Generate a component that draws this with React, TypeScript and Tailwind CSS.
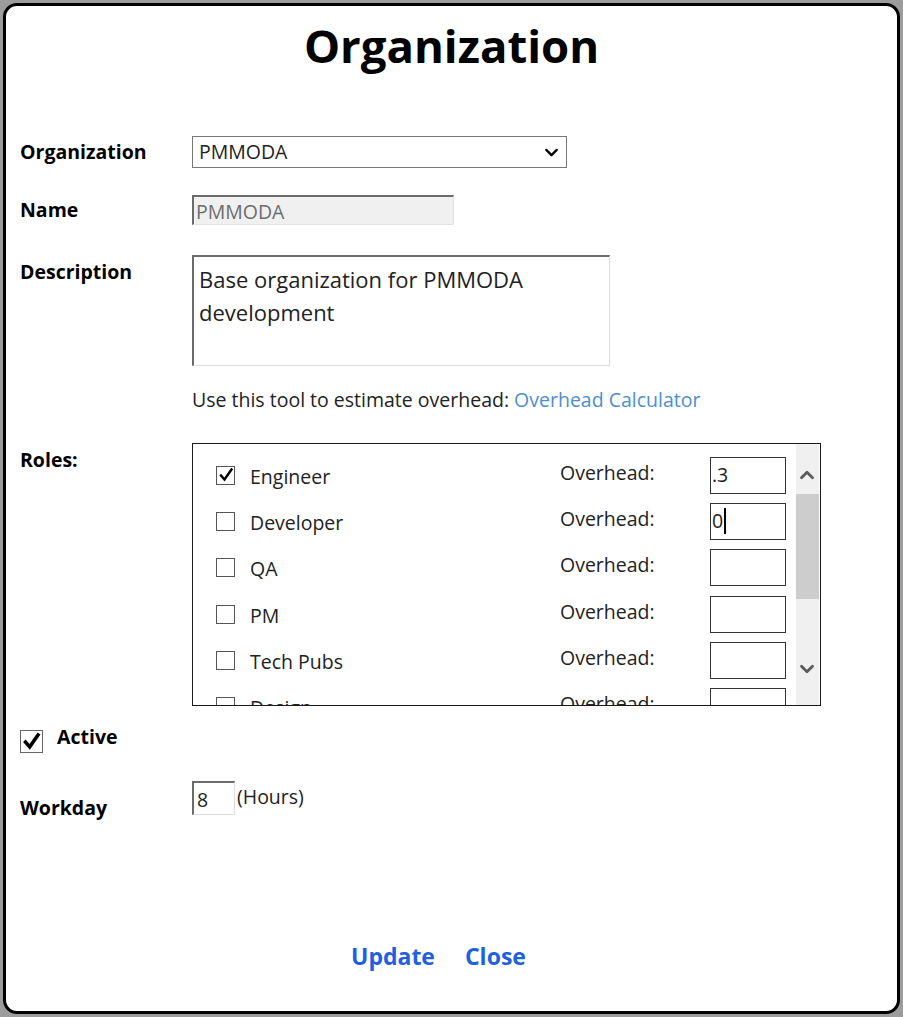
import React from 'react';
import { ChevronDown, ChevronUp } from 'lucide-react';

const roles = [
  { name: 'Engineer', checked: true, value: '.3' },
  { name: 'Developer', checked: false, value: '0', caret: true },
  { name: 'QA', checked: false, value: '' },
  { name: 'PM', checked: false, value: '' },
  { name: 'Tech Pubs', checked: false, value: '' },
  { name: 'Design', checked: false, value: '' },
];

const Check: React.FC<{ size: number; stroke: number }> = ({ size, stroke }) => (
  <svg width={size} height={size} viewBox="0 0 16 16" fill="none">
    <path d="M3 8.5 L6.5 12.5 L13.5 2.5" stroke="#000" strokeWidth={stroke} strokeLinecap="square" />
  </svg>
);

const RoleRow: React.FC<{ role: (typeof roles)[number] }> = ({ role }) => (
  <div className="flex h-[46.4px] shrink-0 items-start leading-[26px]">
    <div className="mt-[9px] flex h-[19px] w-[19px] items-center justify-center border border-[#555] bg-white">
      {role.checked && <Check size={16} stroke={2.4} />}
    </div>
    <span className="ml-[15px] mt-[7px] w-[310px] text-[19.5px] text-[#222]">{role.name}</span>
    <span className="mt-[3px] w-[150px] text-[19.5px] text-[#222]">Overhead:</span>
    <div className="flex h-[37px] w-[76px] items-center border-[1.5px] border-[#333] bg-white pl-[1px] text-[19.5px] text-[#222]">
      {role.value}
      {role.caret && <span className="ml-[1px] h-[26px] w-[1.5px] bg-black" />}
    </div>
  </div>
);

export default function App() {
  return (
    <div className="h-[1017px] w-[903px] bg-[#9c9c9c] p-[3px] font-['Open_Sans',sans-serif]">
      <div className="flex h-full flex-col rounded-[14px] border-[3px] border-black bg-white pl-[14px] pr-[14px]">
        <h1 className="mt-[9px] text-center text-[45.5px] font-bold leading-[60px] text-black">Organization</h1>

        <div className="mt-[61px] flex items-center leading-[26px]">
          <span className="w-[172px] text-[19.5px] font-bold text-black">Organization</span>
          <div className="flex h-[32px] w-[375px] items-center justify-between border border-[#777] bg-white pl-[6px] pr-[4px] text-[19.5px] text-[#222]">
            PMMODA
            <ChevronDown size={21} strokeWidth={2.6} className="text-black" />
          </div>
        </div>

        <div className="mt-[27px] flex items-center leading-[26px]">
          <span className="w-[172px] text-[19.5px] font-bold text-black">Name</span>
          <div className="flex h-[30px] w-[262px] items-end overflow-hidden border-l-2 border-t-2 border-[#6b6b6b] border-b border-r border-b-[#e2e2e2] border-r-[#e2e2e2] bg-[#f0f0f0] pl-[2px] text-[19.5px] leading-[24px] text-[#6d6d6d]">
            PMMODA
          </div>
        </div>

        <div className="mt-[30px] flex items-start leading-[26px]">
          <span className="mt-[4px] w-[172px] text-[19.5px] font-bold text-black">Description</span>
          <div className="h-[111px] w-[418px] border-l-2 border-t-2 border-[#6b6b6b] border-b border-r border-b-[#dcdcdc] border-r-[#dcdcdc] bg-white pl-[5px] pt-[6px] text-[22px] leading-[33px] text-[#222]">
            Base organization for PMMODA
            <br />
            development
          </div>
        </div>

        <p className="ml-[172px] mt-[21px] text-[19.5px] leading-[26px] text-[#222]">
          Use this tool to estimate overhead: <span className="text-[#4d8fcc]">Overhead Calculator</span>
        </p>

        <div className="mt-[30px] flex items-start leading-[26px]">
          <span className="mt-[4px] w-[172px] text-[19.5px] font-bold text-black">Roles:</span>
          <div className="flex h-[263px] w-[629px] border-[1.5px] border-[#1a1a1a] bg-white">
            <div className="flex flex-1 flex-col overflow-hidden pl-[23px] pt-[12.5px]">
              {roles.map((r) => (
                <RoleRow key={r.name} role={r} />
              ))}
            </div>
            <div className="mr-[1.5px] flex w-[23px] flex-col items-center bg-[#f0f0f0]">
              <ChevronUp size={22} strokeWidth={3} className="mt-[20px] text-[#5a5a5a]" />
              <div className="mt-[8px] h-[105px] w-full bg-[#cdcdcd]" />
              <ChevronDown size={22} strokeWidth={3} className="mt-[59px] text-[#5a5a5a]" />
            </div>
          </div>
        </div>

        <div className="mt-[18px] flex items-start leading-[26px]">
          <div className="mt-[6px] flex h-[23px] w-[23px] items-center justify-center border-[1.5px] border-[#666] bg-white">
            <Check size={19} stroke={3} />
          </div>
          <span className="ml-[14px] text-[19.5px] font-bold text-black">Active</span>
        </div>

        <div className="mt-[28px] flex items-start leading-[26px]">
          <span className="mt-[14px] w-[172px] text-[19.5px] font-bold text-black">Workday</span>
          <div className="flex h-[34px] w-[43px] items-end border-l-2 border-t-2 border-[#6b6b6b] border-b border-r border-b-[#dcdcdc] border-r-[#dcdcdc] pl-[3px] text-[19.5px] leading-[29px] text-[#222]">
            8
          </div>
          <span className="ml-[2px] mt-[3px] text-[19.5px] text-[#222]">(Hours)</span>
        </div>

        <div className="ml-[331px] mt-[120px] flex gap-[30px] text-[23px] font-bold leading-[30px] text-[#1f5fe0]">
          <span>Update</span>
          <span>Close</span>
        </div>
      </div>
    </div>
  );
}
